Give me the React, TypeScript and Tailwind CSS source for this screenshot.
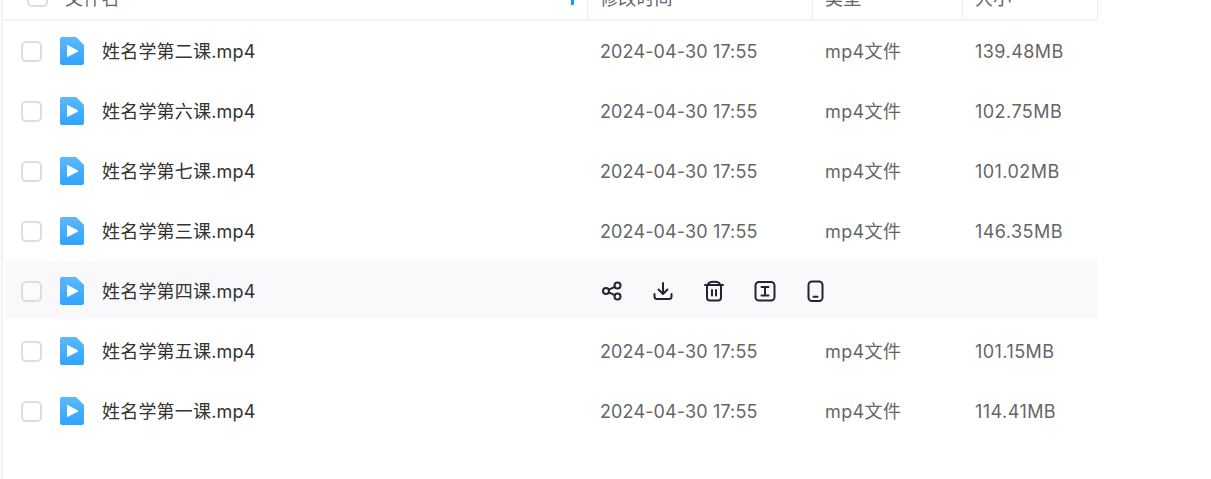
const rows = [
  { name: "姓名学第二课.mp4", size: "139.48MB" },
  { name: "姓名学第六课.mp4", size: "102.75MB" },
  { name: "姓名学第七课.mp4", size: "101.02MB" },
  { name: "姓名学第三课.mp4", size: "146.35MB" },
  { name: "姓名学第四课.mp4", size: "", hover: true },
  { name: "姓名学第五课.mp4", size: "101.15MB" },
  { name: "姓名学第一课.mp4", size: "114.41MB" },
];

function FileIcon() {
  return (
    <svg width="24" height="28" viewBox="0 0 24 28" className="shrink-0">
      <defs>
        <linearGradient id="fg" x1="0" y1="0" x2="0" y2="1">
          <stop offset="0" stopColor="#5cb8fb" />
          <stop offset="1" stopColor="#2fa3ff" />
        </linearGradient>
      </defs>
      <path d="M2 0H16L24 8V26a2 2 0 0 1-2 2H2a2 2 0 0 1-2-2V2a2 2 0 0 1 2-2Z" fill="url(#fg)" />
      <path d="M7.5 8.5V19.5L18 14Z" fill="#fff" stroke="#fff" strokeWidth="1" strokeLinejoin="round" />
    </svg>
  );
}

function Actions() {
  const p = { width: 22, height: 22, viewBox: "0 0 22 22", fill: "none", stroke: "#1f2533", strokeWidth: 2, strokeLinecap: "round" as const, strokeLinejoin: "round" as const };
  return (
    <div className="flex items-center gap-[29px] pl-[1px]">
      <svg {...p}>
        <circle cx="5" cy="11" r="3" />
        <circle cx="16.5" cy="5.500" r="3" />
        <circle cx="16.5" cy="16.500" r="3" />
        <path d="M7.800 9.700L13.800 6.800M7.800 12.300L13.800 15.200" />
      </svg>
      <svg {...p}>
        <path d="M11 3V14M6.500 9.500L11 14L15.500 9.500" />
        <path d="M2.500 14V16.500A2.500 2.500 0 0 0 5 19H17A2.500 2.500 0 0 0 19.500 16.500V14" />
      </svg>
      <svg {...p}>
        <path d="M2 5H20" />
        <path d="M5 5C5 2.500 7 1.800 11 1.800S17 2.500 17 5" />
        <path d="M4 5V17.500A3 3 0 0 0 7 20.500H15A3 3 0 0 0 18 17.500V5" />
        <path d="M9 10V15.500M13 10V15.500" />
      </svg>
      <svg {...p}>
        <rect x="1.500" y="2" width="19" height="18.500" rx="3.500" />
        <path d="M7.500 7H14.500M7.500 15.500H14.500M11 7V15.500" />
      </svg>
      <svg {...p}>
        <rect x="3.500" y="1.500" width="14" height="19.500" rx="3.500" />
        <path d="M8.500 16.800H12.500" />
      </svg>
    </div>
  );
}

function Check() {
  return <div className="w-[21px] h-[21px] rounded-[5px] border-2 border-[#dddddd] bg-white/40 shrink-0" />;
}

export default function App() {
  return (
    <div className="h-[479px] w-[1211px] overflow-hidden bg-white pl-[1px]">
      <div className="h-full border-l-2 border-[#f1f1f1] text-[18px] tracking-[0.2px] font-['Inter','Noto_Sans_CJK_SC',sans-serif]">
        <div className="flex h-[21px] w-[1095px] overflow-hidden border-b-2 border-[#f3f3f6] text-[#666666]">
          <div className="flex w-[584px] -mt-[13px] items-start pl-[24px] relative">
            <div className="w-[21px] h-[21px] -mt-[1px] rounded-[5px] border-2 border-[#dddddd]" />
            <span className="ml-[17px] leading-[24px]">文件名</span>
            <span className="absolute right-[13px] top-[4px] w-[3px] h-[14px] bg-[#0d9bff]" />
          </div>
          <div className="w-[225px] border-l border-[#ececf0] pl-[12px] leading-[24px] -mt-[13px] h-[40px]">修改时间</div>
          <div className="w-[150px] border-l border-[#ececf0] pl-[12px] leading-[24px] -mt-[13px] h-[40px]">类型</div>
          <div className="w-[136px] border-x border-[#ececf0] pl-[12px] leading-[24px] -mt-[13px] h-[40px]">大小</div>
        </div>
        <div className="flex flex-col -mt-[1px]">
          {rows.map((r) => (
            <div key={r.name} className="flex h-[60px] w-[1095px] items-center pl-[2px] py-[1px]">
              <div className={`flex h-full w-full items-center pt-[2px] ${r.hover ? "bg-[#f9f9fc]" : ""}`}>
                <div className="flex w-[582px] items-center pl-[16px]">
                  <Check />
                  <div className="ml-[18px]"><FileIcon /></div>
                  <span className="ml-[18px] text-[#333333]">{r.name}</span>
                </div>
                {r.hover ? (
                  <div className="pl-[13px]"><Actions /></div>
                ) : (
                  <>
                    <div className="w-[225px] pl-[13px] tracking-[0.13px] text-[#666666]">2024-04-30 17:55</div>
                    <div className="w-[150px] pl-[13px] tracking-[0.4px] text-[#666666]">mp4文件</div>
                    <div className="pl-[13px] tracking-[0.45px] text-[#666666]">{r.size}</div>
                  </>
                )}
              </div>
            </div>
          ))}
        </div>
      </div>
    </div>
  );
}
